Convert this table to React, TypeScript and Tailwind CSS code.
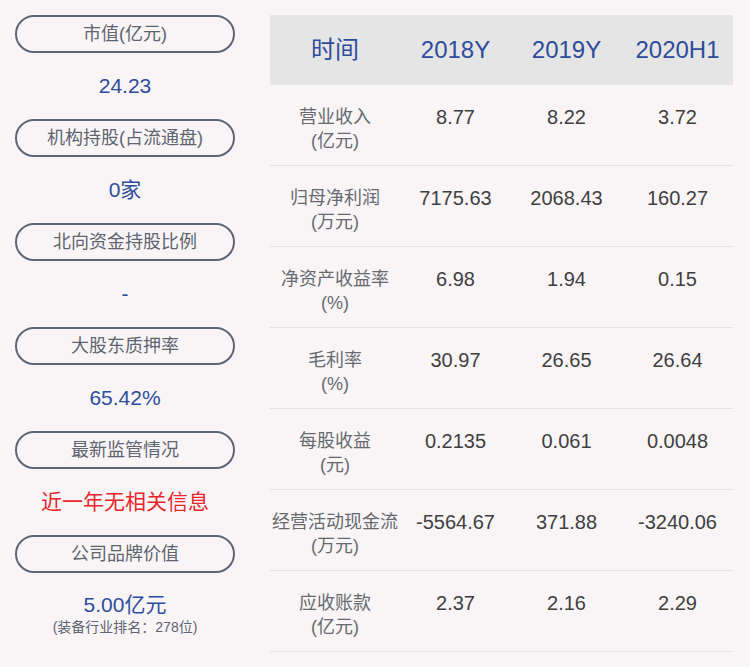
import React from 'react';

const font = { fontFamily: '"Liberation Sans", "Noto Sans CJK SC", sans-serif' };

const summary = [
  { label: '市值(亿元)', value: '24.23' },
  { label: '机构持股(占流通盘)', value: '0家' },
  { label: '北向资金持股比例', value: '-' },
  { label: '大股东质押率', value: '65.42%' },
  { label: '最新监管情况', value: '近一年无相关信息', red: true },
];

const rows = [
  { name: '营业收入', unit: '(亿元)', values: ['8.77', '8.22', '3.72'] },
  { name: '归母净利润', unit: '(万元)', values: ['7175.63', '2068.43', '160.27'] },
  { name: '净资产收益率', unit: '(%)', values: ['6.98', '1.94', '0.15'] },
  { name: '毛利率', unit: '(%)', values: ['30.97', '26.65', '26.64'] },
  { name: '每股收益', unit: '(元)', values: ['0.2135', '0.061', '0.0048'] },
  { name: '经营活动现金流', unit: '(万元)', values: ['-5564.67', '371.88', '-3240.06'] },
  { name: '应收账款', unit: '(亿元)', values: ['2.37', '2.16', '2.29'] },
];

function Pill({ children }: { children: React.ReactNode }) {
  return (
    <div className="h-[38px] rounded-full border-2 border-[#5c6677] flex items-center justify-center text-[18px] text-[#5e6470]">
      {children}
    </div>
  );
}

export default function App() {
  return (
    <div className="w-[750px] h-[667px] bg-[#f9f5f6] flex overflow-hidden" style={font}>
      {/* left summary column */}
      <div className="w-[220px] ml-[15px] pt-[15px] flex flex-col">
        {summary.map((item) => (
          <div key={item.label} className="flex flex-col">
            <Pill>{item.label}</Pill>
            <div
              className={`h-[66px] flex items-center justify-center text-[21px] ${
                item.red ? 'text-[#e8262c]' : 'text-[#2e4c9c]'
              }`}
            >
              {item.value}
            </div>
          </div>
        ))}
        <Pill>公司品牌价值</Pill>
        <div className="flex flex-col items-center pt-[19px]">
          <span className="text-[21px] leading-[26px] text-[#2e4c9c]">5.00亿元</span>
          <span className="text-[14px] leading-[18px] text-[#5e6470]">(装备行业排名：278位)</span>
        </div>
      </div>

      {/* right table */}
      <div className="ml-[35px] mt-[15px] w-[463px] flex flex-col">
        <div className="h-[70px] bg-[#e5e5e5] grid grid-cols-[130px_111px_111px_111px] items-center text-center text-[24px] text-[#2e4c9c]">
          <span>时间</span>
          <span>2018Y</span>
          <span>2019Y</span>
          <span>2020H1</span>
        </div>
        {rows.map((row) => (
          <div
            key={row.name}
            className="h-[81px] border-b border-[#e2e0e1] grid grid-cols-[130px_111px_111px_111px] text-center pt-[20px]"
          >
            <div className="flex flex-col text-[18px] leading-[24px] text-[#666a70]">
              <span className="whitespace-nowrap">{row.name}</span>
              <span>{row.unit}</span>
            </div>
            {row.values.map((v, i) => (
              <span key={i} className="text-[20px] leading-[24px] text-[#3f3f3f]">
                {v}
              </span>
            ))}
          </div>
        ))}
      </div>
    </div>
  );
}
